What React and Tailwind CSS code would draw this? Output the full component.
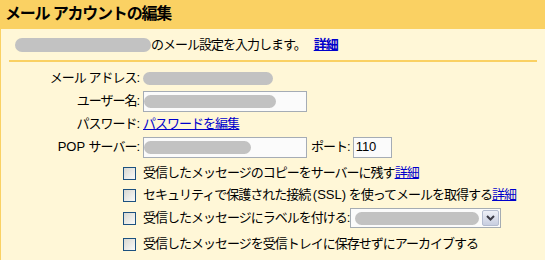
import React from "react";

const font = {
  fontFamily: '"Liberation Sans", Arial, "Noto Sans CJK JP", sans-serif',
};

function Blob({ w, h = 13, className = "" }) {
  return (
    <div
      className={`rounded-full bg-[#c2c2c2] blur-[0.6px] ${className}`}
      style={{ width: w, height: h }}
    />
  );
}

function Checkbox() {
  return (
    <div className="w-[13px] h-[13px] border border-[#1c5180] bg-gradient-to-br from-[#d8d8d2] to-[#fafaf8] shrink-0" />
  );
}

function Label({ children }) {
  return <div className="w-[138px] text-right shrink-0 mr-[4px]">{children}</div>;
}

export default function App() {
  return (
    <div
      className="w-[545px] h-[260px] bg-[#fff7d7] border-l border-[#fad163] text-black text-[13px] tracking-[-1px] overflow-hidden"
      style={font}
    >
      {/* Header */}
      <div className="h-[29px] bg-[#fad163] flex items-center pl-[5px] -ml-px">
        <h1 className="text-[16px] font-bold tracking-[-1.2px] pb-[1px]">
          メール アカウントの編集
        </h1>
      </div>

      {/* Intro */}
      <div className="h-[31px] flex items-center pl-[14px]">
        <Blob w={136} h={14} />
        <span>のメール設定を入力します。</span>
        <a href="#" className="ml-[8px] font-bold text-[#0000cc] underline">
          詳細
        </a>
      </div>

      <div className="ml-[8px] w-[528px] h-[2px] bg-[#fad163]" />

      {/* Fields */}
      <div className="mt-[5px] h-[22px] flex items-center">
        <Label>メール アドレス:</Label>
        <Blob w={130} />
      </div>

      <div className="mt-[1px] h-[22px] flex items-center">
        <Label>ユーザー名:</Label>
        <div className="w-[164px] h-[21px] border border-[#a5acb5] bg-[#fbfbfb] flex items-center">
          <Blob w={132} />
        </div>
      </div>

      <div className="h-[23px] flex items-center">
        <Label>パスワード:</Label>
        <a href="#" className="text-[#0000cc] underline">
          パスワードを編集
        </a>
      </div>

      <div className="mt-[1px] h-[22px] flex items-center">
        <Label>
          <span className="tracking-normal">POP </span>サーバー:
        </Label>
        <div className="w-[164px] h-[21px] border border-[#a5acb5] bg-[#fbfbfb] flex items-center">
          <Blob w={107} />
        </div>
        <span className="ml-[4px]">ポート:</span>
        <div className="ml-[3px] w-[39px] h-[21px] border border-[#a5acb5] bg-[#fbfbfb] flex items-center pl-[2px] tracking-normal">
          110
        </div>
      </div>

      {/* Options */}
      <div className="pl-[122px]">
        <div className="mt-[4px] h-[22px] flex items-center">
          <Checkbox />
          <span className="ml-[7px]">受信したメッセージのコピーをサーバーに残す</span>
          <a href="#" className="text-[#0000cc] underline">
            詳細
          </a>
        </div>

        <div className="h-[22px] flex items-center">
          <Checkbox />
          <span className="ml-[7px]">
            セキュリティで保護された接続 <span className="tracking-normal">(SSL)</span> を使ってメールを取得する
          </span>
          <a href="#" className="text-[#0000cc] underline">
            詳細
          </a>
        </div>

        <div className="mt-[1px] h-[22px] flex items-center">
          <Checkbox />
          <span className="ml-[7px]">受信したメッセージにラベルを付ける:</span>
          <div className="ml-[1px] w-[151px] h-[20px] border border-[#a5acb2] bg-[#fbfbfb] flex items-center justify-between pl-[4px] pr-px">
            <Blob w={124} />
            <div className="w-[17px] h-[16px] border border-[#b4bccf] rounded-[2px] bg-gradient-to-b from-[#eef0f7] to-[#c8cee0] flex items-center justify-center">
              <svg width="9" height="6" viewBox="0 0 9 6">
                <path d="M1 1 L4.5 4.5 L8 1" stroke="#3b3b46" strokeWidth="2" fill="none" />
              </svg>
            </div>
          </div>
        </div>

        <div className="mt-[4px] h-[22px] flex items-center">
          <Checkbox />
          <span className="ml-[7px]">受信したメッセージを受信トレイに保存せずにアーカイブする</span>
        </div>
      </div>
    </div>
  );
}
